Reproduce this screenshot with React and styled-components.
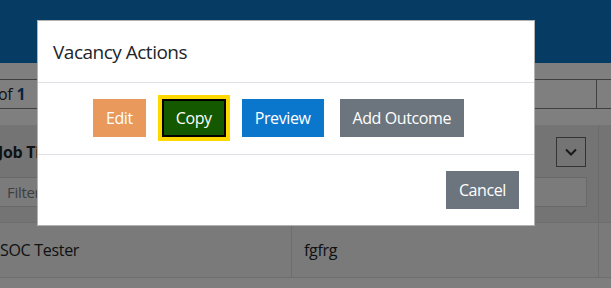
import React from "react";
import styled, { createGlobalStyle } from "styled-components";

const GlobalStyle = createGlobalStyle`
  html, body { margin: 0; padding: 0; }
  body {
    font-family: "Open Sans", "Noto Sans", Arial, sans-serif;
    color: #212529;
    background: #ffffff;
  }
  * { box-sizing: border-box; }
`;

const Page = styled.div`
  width: 611px;
  height: 288px;
  overflow: hidden;
  background: #fcfcfc;
`;

const TopBar = styled.header`
  height: 63px;
  background: #0c76c8;
`;

const Gap = styled.div`
  height: ${(p) => p.$h}px;
  background: #ffffff;
`;

const Pager = styled.div`
  height: 30px;
  display: grid;
  grid-template-columns: 597px 1fr;
  border-top: 1px solid #808080;
  border-bottom: 1px solid #808080;
  background: #ffffff;
`;

const PagerInfo = styled.div`
  display: flex;
  align-items: center;
  font-size: 16px;
  letter-spacing: -0.3px;
  margin-left: -2px;
  color: #212529;
  border-right: 1px solid #808080;
  b { color: #0b4f8a; font-weight: 700; margin-left: 4px; }
`;

const TableHead = styled.div`
  height: 97px;
  display: grid;
  grid-template-columns: 599px 1fr;
  background: #e8e8e8;
`;

const HeadCell = styled.div`
  display: flex;
  flex-direction: column;
  border-right: 1px solid #d6d6d6;
`;

const HeadTop = styled.div`
  height: 52px;
  display: flex;
  align-items: center;
  justify-content: space-between;
  padding-right: 12px;
  padding-top: 2px;
`;

const HeadTitle = styled.span`
  font-weight: 700;
  font-size: 16px;
  letter-spacing: -0.3px;
  margin-left: -2px;
  color: #212529;
`;

const ChevronBox = styled.div`
  width: 30px;
  height: 30px;
  border: 1px solid #666666;
  display: flex;
  align-items: center;
  justify-content: center;
`;

const FilterInput = styled.div`
  height: 30px;
  width: 588px;
  margin-left: -1px;
  border: 1px solid #d2d2d2;
  background: #f6f6f6;
  display: flex;
  align-items: center;
  padding-left: 7px;
  font-size: 15px;
  color: #7a7f85;
  letter-spacing: -0.3px;
`;

const Row = styled.div`
  height: 56px;
  display: grid;
  grid-template-columns: 292px 307px 1fr;
  border-top: 1px solid #dcdcdc;
  border-bottom: 1px solid #dcdcdc;
  background: #f4f4f4;
`;

const Cell = styled.div`
  display: flex;
  align-items: center;
  font-size: 16px;
  letter-spacing: -0.3px;
  color: #212529;
  padding-left: ${(p) => p.$pad}px;
  border-right: 1px solid #dcdcdc;
`;

const Backdrop = styled.div`
  position: fixed;
  inset: 0;
  background: rgba(0, 0, 0, 0.5);
`;

const Dialog = styled.div`
  margin: 20px 0 0 37px;
  width: 498px;
  background: #ffffff;
  border: 1px solid rgba(0, 0, 0, 0.3);
`;

const DialogHeader = styled.div`
  padding: 17px 16px 15px 15px;
  border-bottom: 1px solid #dee2e6;
`;

const Title = styled.h5`
  margin: 0;
  font-size: 19px;
  line-height: 29px;
  font-weight: 400;
  letter-spacing: -0.5px;
  color: #212529;
`;

const DialogBody = styled.div`
  padding: 16px 16px 17px 17px;
  display: flex;
  justify-content: center;
`;

const DialogFooter = styled.div`
  padding: 16px 15px 16px 16px;
  border-top: 1px solid #dee2e6;
  display: flex;
  justify-content: flex-end;
`;

const colors = {
  edit: "#e8995b",
  copy: "#145800",
  preview: "#0b77cc",
  secondary: "#6c757d",
};

const Button = styled.button`
  font-family: inherit;
  font-size: 16px;
  line-height: 24px;
  letter-spacing: -0.4px;
  color: #ffffff;
  background: ${(p) => colors[p.$variant]};
  border: 1px solid ${(p) => colors[p.$variant]};
  border-radius: 0;
  padding: 6px 12px;
  margin-right: ${(p) => (p.$spaced ? 16 : 0)}px;
  cursor: pointer;
  ${(p) =>
    p.$focused &&
    `
    border: 2px solid #000000;
    padding: 5px 12px;
    outline: 4px solid #ffd800;
  `}
`;

export default function App() {
  return (
    <>
      <GlobalStyle />
      <Page>
        <TopBar />
        <Gap $h={16} />
        <Pager>
          <PagerInfo>
            of<b>1</b>
          </PagerInfo>
          <div />
        </Pager>
        <Gap $h={16} />
        <TableHead>
          <HeadCell>
            <HeadTop>
              <HeadTitle>Job Title</HeadTitle>
              <ChevronBox>
                <svg width="14" height="10" viewBox="0 0 14 10">
                  <path d="M2 2.5 L7 7.5 L12 2.5" fill="none" stroke="#333" strokeWidth="2" />
                </svg>
              </ChevronBox>
            </HeadTop>
            <FilterInput>Filter</FilterInput>
          </HeadCell>
          <div />
        </TableHead>
        <Row>
          <Cell $pad={0}>SOC Tester</Cell>
          <Cell $pad={12}>fgfrg</Cell>
          <div />
        </Row>
      </Page>
      <Backdrop>
        <Dialog>
          <DialogHeader>
            <Title>Vacancy Actions</Title>
          </DialogHeader>
          <DialogBody>
            <Button $variant="edit" $spaced>Edit</Button>
            <Button $variant="copy" $spaced $focused>Copy</Button>
            <Button $variant="preview" $spaced>Preview</Button>
            <Button $variant="secondary" $spaced>Add Outcome</Button>
          </DialogBody>
          <DialogFooter>
            <Button $variant="secondary">Cancel</Button>
          </DialogFooter>
        </Dialog>
      </Backdrop>
    </>
  );
}
